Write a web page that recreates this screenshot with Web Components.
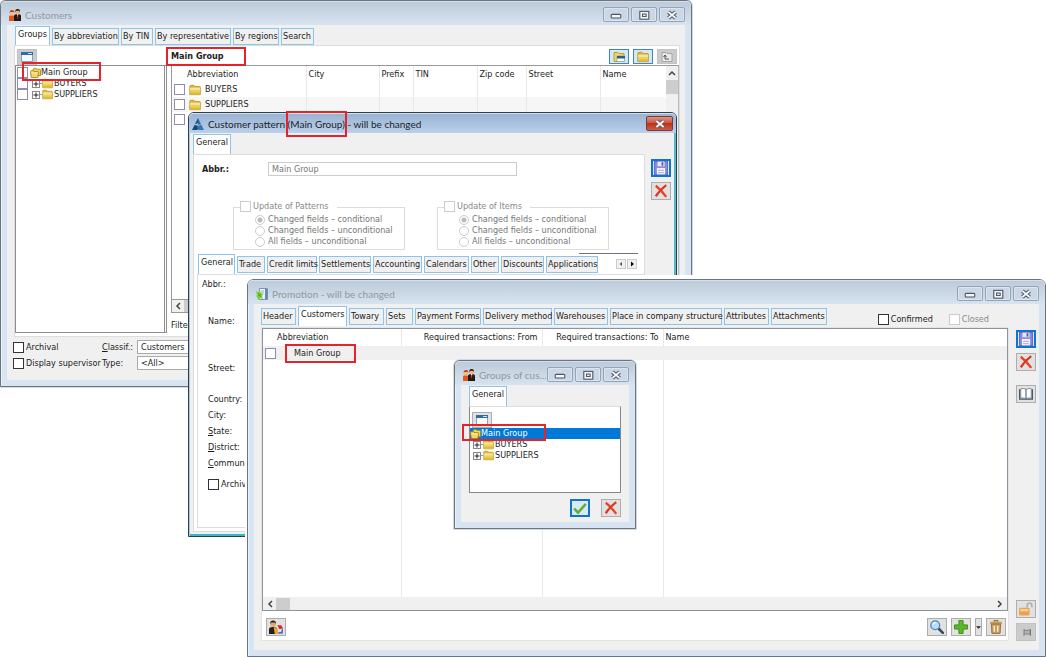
<!DOCTYPE html>
<html lang="en">
<head>
<meta charset="utf-8">
<title>Promotion - will be changed</title>
<style>
html, body { margin: 0; }
body { background: #fff; font: 9px/11px "DejaVu Sans Condensed", Tahoma, "Liberation Sans", sans-serif; color: #1c1c1c; }
</style>
</head>
<body>
<erp-desktop></erp-desktop>
<script>
const ICONS = {
  people: '<path d="M0 11V8q0-2 3-2l3 1v5H0z" fill="#e0561f"/><circle cx="3" cy="4.500" r="2.200" fill="#f4b98c"/><path d="M.6 4Q.5 1 3 1t2.500 3L4.600 3H1.500z" fill="#b8431c"/><path d="M5 12V7q0-2 3.500-2T12 7v5z" fill="#1d1a1a"/><path d="M7.800 5h1.600L8.600 9z" fill="#fff"/><path d="M8.400 6h.6l.3 3-.6 1-.5-1z" fill="#c22"/><circle cx="8.600" cy="3" r="2.200" fill="#f0b27a"/><path d="M6.300 3Q6 0 8.600 0T11 3l-1-1.200H7.300z" fill="#1d1410"/>',
  promo: '<path d="M3.500.5h8v11h-8z" fill="#eef4fb" stroke="#7d94b8"/><path d="M9 1h2.500v10H9z" fill="#6c86b3"/><path d="M5 3h3M5 5h3" stroke="#9db2d0"/><path d="M0 3l2 1 2-1 1 2 2 1-1 2 1 3-3-1-2 2-1-3-1-1 1-1z" fill="#7fd436"/><path d="M2 5l3 4M2 8l3-2" stroke="#3f9c16" stroke-width=".8"/>',
  tri: '<path d="M6 0l3 6-3 1z" fill="#2b6fa8"/><path d="M6 0L2.800 6.500 6 5z" fill="#1d4d7c"/><path d="M2.500 7L0 12h5.500L7 8z" fill="#174a78"/><path d="M9.300 6.500L12 12H6.500L5 8.500z" fill="#2f7cb4"/>',
  folder: '<path d="M.8 2.300q0-1 1-1H5l1 1.200h4.500q.8 0 .8.800v7.400H.8z" fill="#d9b637" stroke="#b8932a" stroke-width=".8"/><path d="M1.200 4h9.700v6.300H1.200z" fill="#ecd05c"/><path d="M1.200 3.600h9.700v2.400H1.200z" fill="#f6e694"/><path d="M1.200 8.500h9.700v1.800H1.200z" fill="#ddb93c"/>',
  open: '<path d="M3.500 3.500q0-2 1-2h2l1 1h3q1 0 1 1v6h-8z" fill="#f1d65c" stroke="#a98413"/><path d="M.5 6q0-2 1-2h2l1 1h4q1 0 1 1l-1 5.500h-7z" fill="#f0d868" stroke="#a98413"/><path d="M2 6.500h6.500" stroke="#fff4b8"/>',
  folderList: '<path d="M1 1.500h4l1 1h5v8H1z" fill="#f0d464" stroke="#c29c2a"/><path d="M4 5h7.500v5.500H4z" fill="#fff" stroke="#7a93ad" stroke-width=".6"/><path d="M4 5h8v2.500H4z" fill="#2c5f8f"/>',
  folderUp: '<path d="M1 1.500h4l1 1h5v8H1z" fill="#e9e9e9" stroke="#a5a5a5"/><path d="M4 8h4M4 4.500V8M2.500 6L4 4l1.500 2" fill="none" stroke="#555"/>',
  win: '<path d="M.5 1.500h11v9H.5z" fill="#f7fafd" stroke="#8aa0b5"/><path d="M0 1h12v3H0z" fill="#2f6da3"/><path d="M7 2.500h4" stroke="#cfe3f4"/>',
  save: '<path d="M.5.500h11v11H.5z" fill="#8b8de0" stroke="#6a6dc4"/><path d="M3 .5h6v4H3z" fill="#e7e9fb"/><path d="M6.500 1h1.500v3H6.500z" fill="#5557a5"/><path d="M2.500 6h7v5.500h-7z" fill="#f3f4fd"/><path d="M3.500 8h5M3.500 10h5" stroke="#a4a6da" stroke-width=".8"/>',
  del: '<path d="M1.500 1.500Q6 5 10.500 11" fill="none" stroke="#e8432a" stroke-width="2"/><path d="M10.500 1Q5 5 1.500 10.500" fill="none" stroke="#d93a22" stroke-width="2"/>',
  book: '<path d="M.5 2v8.500H6h5.500V2" fill="#9fb2c4" stroke="#47586a"/><path d="M1.500 1.500Q4 .8 6 2q2-1.200 4.500-.5v8Q8 9 6 10 4 9 1.500 9.500z" fill="#fff" stroke="#6f7f8f" stroke-width=".7"/><path d="M6 2v8" stroke="#4a5866" stroke-width=".9"/>',
  lock: '<path d="M7 5V3q0-2 2-2t2 2v1.500" fill="none" stroke="#b3b3b3" stroke-width="1.500"/><rect x="0" y="5" width="9" height="6.500" rx="1" fill="#efa04b"/><path d="M1 6h7v2H1z" fill="#fbd29c"/>',
  flag: '<path d="M4 3v7M4 4q2 1 3 .5T10 4v4q-2 .5-3 0T4 8" fill="#b5b5b5" stroke="#777" stroke-width=".9"/><path d="M10.500 3v7" stroke="#777" stroke-width=".9"/>',
  ok: '<path d="M1 6.500l3.300 3.500L11 2.500" fill="none" stroke="#5db030" stroke-width="2.200"/>',
  search: '<path d="M7.500 7.500l3.500 3.500" stroke="#3d4a57" stroke-width="2.200" stroke-linecap="round"/><circle cx="4.500" cy="4.500" r="3.800" fill="#b9dcf7" stroke="#4d86bb" stroke-width="1.100"/><path d="M2.500 4Q3 2 5 2.200" fill="none" stroke="#fff"/>',
  plus: '<path d="M4.200.5h3.600v3.700h3.700v3.600H7.800v3.700H4.200V7.800H.5V4.200h3.700z" fill="#5cb82b" stroke="#3b8b15" stroke-width=".8"/>',
  trash: '<path d="M4.500 1.500V.6h3v.9" fill="none" stroke="#9b6f2c"/><path d="M1 1.500h10v2H1z" fill="#c79a55"/><path d="M2 3.500h8l-.5 8h-7z" fill="#c9a063" stroke="#8f6527" stroke-width=".7"/><path d="M4.500 5v5M7.500 5v5" stroke="#fff3da" stroke-width="1.100"/>',
  person: '<path d="M0 12V8q0-2 3.500-2T7 8v4z" fill="#222"/><circle cx="3.500" cy="3.500" r="2.500" fill="#e8a96d"/><path d="M1 3.500Q.8.500 3.500.5T6 3.500L5 2.200H2z" fill="#2a1a10"/><path d="M4 6.500h2l1 1.500 1 4H5z" fill="#f2a32c"/><path d="M7 4.500h3.500L12 7 9 8z" fill="#d8272b"/><path d="M8 11h3l1-3.500" fill="none" stroke="#4a73c4" stroke-width="1.600"/>',
  caret: '<path d="M0 3h12L6 9z" fill="#222"/>'
};
const svg = (n) => `<svg viewBox="0 0 12 12" aria-hidden="true">${ICONS[n] || ''}</svg>`;
const BASE = `*{box-sizing:border-box}button,input,select{font:inherit;color:inherit;margin:0}`;

function define(name, css, html) {
  const template = document.createElement('template');
  customElements.define(name, class extends HTMLElement {
    connectedCallback() {
      if (this.shadowRoot) return;
      template.innerHTML = `<style>${BASE}${css}</style>` + (typeof html === 'function' ? html(this) : html);
      this.attachShadow({ mode: 'open' }).append(template.content.cloneNode(true));
    }
  });
}

define('ui-icon', `:host{display:inline-block;flex:none;width:12px;height:12px}svg{display:block;width:100%;height:100%}`,
  el => svg(el.getAttribute('name')));

/* Red frame laid over whatever it wraps */
define('ui-mark', `:host{position:relative;display:inline-block}
  i{position:absolute;inset:var(--inset,-4px);border:2px solid #e3242b;z-index:5;pointer-events:none}`,
  `<slot></slot><i></i>`);

define('ui-button', `:host{display:block;flex:none;width:20px;height:18px}
  button{display:grid;place-items:center;width:100%;height:100%;padding:0;background:#e1e1e1;border:1px solid #adadad}
  :host([tone=blue]) button{background:#d3e8f8;border-color:#3f86bf}
  :host([tone=focus]) button{background:#dbe9f6;border:2px solid #0f74cf}
  :host([tone=flat]) button{background:#cbcbcb;border-color:#c2c2c2}
  svg{width:14px;height:14px;display:block}
  :host([tone=blue]) svg,:host([tone=flat]) svg,:host([small]) svg{width:12px;height:12px}
  :host([narrow]){width:7px}:host([narrow]) svg{width:5px;height:5px}`,
  el => `<button type="button" aria-label="${el.getAttribute('label')}">${svg(el.getAttribute('icon'))}</button>`);

define('ui-tab', `:host{display:block;flex:none;width:var(--w,auto)}
  button{display:block;width:100%;height:17px;padding:0 0 1px 1px;text-align:left;white-space:nowrap;background:#f0f0f0;border:1px solid #8cc4ec;margin-bottom:1px}
  :host([selected]) button{height:20px;padding-bottom:4px;padding-left:2px;background:#fff;border-bottom:0;margin:0}`,
  el => `<button type="button" role="tab" aria-selected="${el.hasAttribute('selected')}"><slot></slot></button>`);
define('ui-tabs', `:host{display:flex;align-items:flex-end;gap:2px;height:20px;flex:none}`, `<slot></slot>`);

define('ui-check', `:host{display:block}
  label{display:flex;align-items:center;gap:2px;white-space:nowrap}
  input{appearance:none;flex:none;width:11px;height:11px;border:1px solid #333;background:#fff}
  :host([faint]) input{border-color:#8c8cb4}
  :host([disabled]){color:#8a8a8a} input:disabled{border-color:#ccc}`,
  el => `<label><input type="checkbox" ${el.hasAttribute('disabled') ? 'disabled' : ''} ${el.hasAttribute('label') ? `aria-label="${el.getAttribute('label')}"` : ''}><slot></slot></label>`);

define('ui-radio', `:host{display:block;color:#767676}
  label{display:flex;align-items:center;gap:3px;white-space:nowrap}
  input{appearance:none;flex:none;width:10px;height:10px;border:1px solid #ccc;border-radius:50%;background:#fff}
  input:checked{background:radial-gradient(#bbb 0 2px,#fff 3px)}`,
  el => `<label><input type="radio" disabled ${el.hasAttribute('checked') ? 'checked' : ''}><slot></slot></label>`);

define('ui-controls', `:host{display:flex;gap:2px;flex:none}
  button{display:grid;place-items:center;width:26px;height:15px;padding:0;border:1px solid #93a3b8;border-radius:2px;background:#cbd7e4;box-shadow:inset 0 0 0 1px #dbe5ef}
  button.red{width:27px;background:linear-gradient(#dc9484,#c9523e 50%,#b8331f 50%,#cc5c45);border-color:#7b3a38;box-shadow:none}
  svg{width:12px;height:12px;display:block}`,
  el => {
    const x = (fill, line) => `<svg viewBox="0 0 10 10" aria-hidden="true"><path d="M2 2.500l6 5M8 2.500l-6 5" stroke="${line}" stroke-width="3.200"/><path d="M2 2.500l6 5M8 2.500l-6 5" stroke="${fill}" stroke-width="1.500"/></svg>`;
    if (el.hasAttribute('active')) return `<button class="red" type="button" aria-label="Close">${x('#fff', '#8a4a48')}</button>`;
    return `<button type="button" aria-label="Minimize"><svg viewBox="0 0 10 10"><rect x="1" y="4.500" width="8" height="3" rx=".8" fill="#f4f6f9" stroke="#4b5563" stroke-width=".9"/></svg></button>
    <button type="button" aria-label="Maximize"><svg viewBox="0 0 10 10"><rect x="1.500" y="2" width="7.500" height="6.500" fill="#f4f6f9" stroke="#4b5563" stroke-width=".9"/><rect x="3.800" y="4.200" width="3" height="2" fill="#fff" stroke="#4b5563" stroke-width=".9"/></svg></button>
    <button type="button" aria-label="Close">${x('#f4f6f9', '#4b5563')}</button>`;
  });

define('ui-window', `:host{display:flex;flex-direction:column;position:absolute;background:#d7e4f1;border:1px solid #6b7580;border-radius:6px 6px 0 0;padding:0 6px 6px;box-shadow:inset 1px 0 0 #eaf1f8,0 0 0 1px #d5d9dd}
  header{display:flex;align-items:center;gap:4px;height:24px;flex:none;margin:0 -6px;padding:3px 6px 0 8px;background:linear-gradient(#bccad9,#d7e3ef);border-radius:5px 5px 0 0;font-size:10px;font-family:Lato,"Segoe UI",sans-serif;line-height:12px;color:#9198a0;box-shadow:inset 0 1px 0 #d6dfe8}
  h2{flex:1;min-width:0;margin:0;font:inherit;white-space:nowrap}
  main{flex:1;min-height:0;display:flex;flex-direction:column;background:#f0f0f0}
  :host([active]){padding:0 4px 4px 3px;background:#eef1f4;border-color:#28404f;box-shadow:inset 1px 0 #b9c3cc,inset -2px 0 #58b5c4,inset 0 -2px #3fb3c8}
  :host([active]) header{height:20px;margin:0 -4px 0 -3px;padding:1px 3px 0 3px;background:linear-gradient(#9ab3d2,#b9cfea);color:#20242a}
  ui-controls{align-self:flex-start;margin-top:3px}
  :host([active]) ui-controls{margin-top:2px}`,
  el => `<header><ui-icon name="${el.getAttribute('icon')}"></ui-icon><h2><slot name="title"></slot></h2><ui-controls ${el.hasAttribute('active') ? 'active' : ''}></ui-controls></header><main><slot></slot></main>`);

define('ui-tree', `:host{display:block}
  ul{list-style:none;margin:0;padding:0}
  li{display:flex;align-items:center;height:11px;white-space:nowrap}
  li ui-check{width:11px}
  .b{flex:none;display:grid;place-items:center;width:8px;height:8px;border:1px solid #888;background:#fff}
  .b svg{width:6px;height:6px}
  .dash{width:2px;border-top:1px solid #999}
  ui-icon{width:11px;height:11px}
  .kid .s{width:3px}
  ui-mark{--inset:-5px -13px -3px -19px}
  :host([checks]) .kid .s{width:4px}
  :host([checks]) .root .s{width:2px}
  :host([highlight]) .root{background:#0078d7;color:#fff}
  :host([highlight]) ui-mark{--inset:-4px -18px -2px -19px}
  .kid span{padding-left:1px}`,
  el => {
    const c = t => el.hasAttribute('checks') ? `<ui-check faint label="${t}"></ui-check>` : '';
    const kid = t => `<li class="kid">${c(t)}<i class="s"></i><i class="b"><svg viewBox="0 0 6 6"><path d="M3 .5v5M.5 3h5" stroke="#222"/></svg></i><i class="dash"></i><ui-icon name="folder"></ui-icon><span>${t}</span></li>`;
    return `<ul><li class="root">${c('Main Group')}<i class="s"></i><ui-icon name="open"></ui-icon><ui-mark>Main Group</ui-mark></li>${kid('BUYERS')}${kid('SUPPLIERS')}</ul>`;
  });

const TABLE = `table{border-collapse:collapse;table-layout:fixed;width:100%}
  th{font-weight:400;text-align:left;white-space:nowrap}
  th,td{padding:0;border-right:1px solid #e8e8e8}th:last-child,td:last-child{border-right:0}`;

define('customers-view', `${TABLE}
  :host{display:flex;flex-direction:column;flex:1;min-height:0;padding:1px 5px 0 7px}
  ui-tabs{margin-left:1px}
  .pane{display:grid;grid-template-columns:152px 1fr;column-gap:4px;background:#fff;border:1px solid #ddd;height:292px;margin-top:-1px}
  .left,.right{display:flex;flex-direction:column;min-width:0}
  .bar{height:19px;display:flex;align-items:center;gap:4px;flex:none}
  .left .bar{padding:2px 0 0 2px}
  .left ui-tree{flex:1;border:1px solid #8d8d8d;border-width:1px 3px 1px 1px;border-right-style:double;padding:1px 0 0 1px;margin-bottom:3px}
  .right .bar{padding:2px 2px 0 0}
  h3{flex:1;margin:0;font-size:9px;font-weight:bold}
  h3 ui-mark{--inset:-4px -22px -4px -5px}
  .grid{flex:1;display:flex;border:1px solid #999;border-right-color:#bbb;min-height:0}
  .grid>div{flex:1;min-width:0}
  th{height:16px;padding-left:2px}th:first-child{padding-left:15px}
  td{height:15px}tr.alt{background:#f6f6f6}
  .c{display:flex;align-items:center;gap:4px;padding-left:2px}
  .grid>.vs{flex:none;width:12px;background:#f0f0f0;display:flex;flex-direction:column;align-items:center}
  .vs svg{width:8px;height:14px}.vs i{width:12px;height:14px;background:#cdcdcd}
  .hs{height:13px;background:#f0f0f0;border:1px solid #999;border-top:0;display:flex;align-items:center}
  .hs svg{width:12px;height:8px}.hs i{width:24px;height:12px;background:#cdcdcd}
  .f{height:23px;padding-top:7px}
  .bar ui-button{height:15px}.left .bar ui-button{height:16px}
  .foot{display:grid;grid-template-columns:88px 34px 150px;gap:2px 1px;align-items:center;margin-left:-1px;padding-top:3px}
  select{appearance:none;height:14px;padding:0 3px;border:1px solid #aaa;background:#fff;border-radius:0}
  u{text-underline-offset:1px}`,
  `<ui-tabs><ui-tab selected style="--w:35px">Groups</ui-tab><ui-tab style="--w:67px">By abbreviation</ui-tab><ui-tab style="--w:32px">By TIN</ui-tab><ui-tab style="--w:76px">By representative</ui-tab><ui-tab style="--w:46px">By regions</ui-tab><ui-tab style="--w:33px">Search</ui-tab></ui-tabs>
  <div class="pane">
    <div class="left"><div class="bar"><ui-button icon="win" label="Window" tone="flat"></ui-button></div><ui-tree checks></ui-tree></div>
    <div class="right">
      <div class="bar"><h3><ui-mark>Main Group</ui-mark></h3><ui-button icon="folderList" label="List" tone="blue"></ui-button><ui-button icon="folder" label="Folder" tone="blue"></ui-button><ui-button icon="folderUp" label="Up" tone="flat"></ui-button></div>
      <div class="grid"><div><table><colgroup><col style="width:134px"><col style="width:73px"><col style="width:34px"><col style="width:64px"><col style="width:49px"><col style="width:74px"><col></colgroup>
        <thead><tr><th>Abbreviation</th><th>City</th><th>Prefix</th><th>TIN</th><th>Zip code</th><th>Street</th><th>Name</th></tr></thead>
        <tbody><tr><td><div class="c"><ui-check faint label="Select BUYERS"></ui-check><ui-icon name="folder"></ui-icon><span>BUYERS</span></div></td><td></td><td></td><td></td><td></td><td></td><td></td></tr>
        <tr class="alt"><td><div class="c"><ui-check faint label="Select SUPPLIERS"></ui-check><ui-icon name="folder"></ui-icon><span>SUPPLIERS</span></div></td><td></td><td></td><td></td><td></td><td></td><td></td></tr>
        <tr><td><div class="c"><ui-check faint label="Select row"></ui-check></div></td><td></td><td></td><td></td><td></td><td></td><td></td></tr></tbody></table></div>
        <div class="vs"><svg viewBox="0 0 8 14"><path d="M1 9l3-3 3 3" fill="none" stroke="#444" stroke-width="1.500"/></svg><i></i></div></div>
      <div class="hs"><svg viewBox="0 0 12 8"><path d="M8 1L5 4l3 3" fill="none" stroke="#444" stroke-width="1.500"/></svg><i></i></div>
      <div class="f">Filter</div>
    </div>
  </div>
  <div class="foot"><ui-check>Archival</ui-check><label for="cl"><u>C</u>lassif.:</label><select id="cl"><option>Customers</option></select>
  <ui-check>Display supervisor</ui-check><label for="ty">Type:</label><select id="ty"><option>&lt;All&gt;</option></select></div>`);

define('update-options', `:host{display:block;width:172px}
  fieldset{margin:0;border:1px solid #dcdcdc;padding:1px 0 0 21px;height:49px;min-width:0}
  legend{margin-left:-15px;padding:0 8px 1px 0;height:12px}
  ui-radio{height:11px}`,
  `<fieldset><legend><ui-check disabled><slot></slot></ui-check></legend>
  <ui-radio checked>Changed fields – conditional</ui-radio><ui-radio>Changed fields – unconditional</ui-radio><ui-radio>All fields – unconditional</ui-radio></fieldset>`);

define('pattern-view', `:host{display:flex;flex-direction:column;flex:1;min-height:0;padding:1px 0 0 1px}
  .body{flex:1;display:grid;grid-template-columns:1fr 21px;column-gap:6px;min-height:0}
  .pane{background:#fff;border:1px solid #ddd;display:flex;flex-direction:column;min-width:0;padding:7px 0 3px 3px}
  .row{display:flex;align-items:center;padding-left:5px}
  .row label{width:66px;font-weight:bold}
  .row input{width:249px;height:14px;border:1px solid #ccc;background:#fff;color:#767676;padding:0 3px}
  .sets{display:flex;gap:32px;margin:25px 0 0 36px}
  .tabs{display:flex;align-items:center;margin:4px 0 0 1px;position:relative}
  .tabs::after{content:"";position:absolute;right:6px;top:-1px;width:59px;height:1px;background:#6d7480}
  .tabs ui-tabs{flex:1}
  .spin{display:flex;margin-right:7px;gap:1px}
  .spin button{width:10px;height:10px;padding:0;border:1px solid #ccc;background:#f0f0f0;display:grid;place-items:center}
  .spin svg{width:6px;height:6px}
  .inner{flex:1;border:1px solid #ddd;border-right:0;padding:4px 0 0 10px}
  dl{margin:0;display:grid;grid-template-rows:37px 47px 31px 16px 16px 16px 16px 21px}
  dt:first-child{margin-left:-6px}
  .side{display:flex;flex-direction:column;gap:5px;padding-top:5px}`,
  `<ui-tabs><ui-tab selected style="--w:38px">General</ui-tab></ui-tabs>
  <div class="body"><div class="pane">
    <div class="row"><label for="ab">Abbr.:</label><input id="ab" value="Main Group" disabled></div>
    <div class="sets"><update-options>Update of Patterns</update-options><update-options>Update of Items</update-options></div>
    <div class="tabs"><ui-tabs><ui-tab selected style="--w:37px">General</ui-tab><ui-tab style="--w:28px">Trade</ui-tab><ui-tab style="--w:50px">Credit limits</ui-tab><ui-tab style="--w:52px">Settlements</ui-tab><ui-tab style="--w:49px">Accounting</ui-tab><ui-tab style="--w:45px">Calendars</ui-tab><ui-tab style="--w:28px">Other</ui-tab><ui-tab style="--w:43px">Discounts</ui-tab><ui-tab style="--w:52px">Applications</ui-tab></ui-tabs>
    <div class="spin"><button type="button" aria-label="Scroll left"><svg viewBox="0 0 6 6"><path d="M4 1v4L1.500 3z" fill="#555"/></svg></button><button type="button" aria-label="Scroll right"><svg viewBox="0 0 6 6"><path d="M2 .5v5L5 3z" fill="#000"/></svg></button></div></div>
    <div class="inner"><dl><dt>Abbr.:</dt><dt>Name:</dt><dt>Street:</dt><dt>Country:</dt><dt>City:</dt><dt><u>S</u>tate:</dt><dt><u>D</u>istrict:</dt><dt><u>C</u>ommune:</dt></dl><ui-check>Archival</ui-check></div>
  </div><div class="side"><ui-button icon="save" label="Save" tone="focus"></ui-button><ui-button icon="del" label="Cancel"></ui-button></div></div>`);

define('promotion-view', `${TABLE}
  :host{display:flex;flex-direction:column;flex:1;min-height:0;padding:2px 3px 9px 7px}
  .top{display:flex;align-items:flex-end;margin-bottom:1px}
  .top ui-tabs{flex:1}
  .ch{display:flex;gap:16px;margin:0 47px 1px 0}
  .body{flex:1;display:grid;grid-template-columns:1fr 20px;column-gap:7px;min-height:0}
  .pane{display:flex;flex-direction:column;min-width:0;background:#fff;border:1px solid #e4e4e4}
  .grid{flex:1;display:flex;flex-direction:column;border:1px solid #8d949b;min-height:0}
  table{height:100%}
  .wrap{flex:1;min-height:0}
  th{height:17px}th.r{text-align:right;padding-right:4px}
  th:first-child{padding-left:14px}th:last-child{padding-left:2px}
  .row td{height:14px;background:#f0f0f0;border:0}
  .row div{display:flex;align-items:center;padding-left:2px;gap:18px}
  .row ui-mark{--inset:-4px -15px -4px -9px}
  .hs{height:13px;background:#f0f0f0;display:flex;align-items:center;flex:none}
  .hs svg{width:13px;height:8px}.hs i{width:14px;height:12px;background:#cdcdcd;margin-right:auto}
  .tools{display:flex;align-items:center;gap:4px;height:29px;padding:3px 2px 0 4px;flex:none}
  .tools .s{flex:1}
  .side{display:flex;flex-direction:column;gap:5px;padding-top:3px}
  .side .g{height:4px}.side .s{flex:1}`,
  `<div class="top"><ui-tabs><ui-tab style="--w:35px">Header</ui-tab><ui-tab selected style="--w:49px">Customers</ui-tab><ui-tab style="--w:35px">Towary</ui-tab><ui-tab style="--w:27px">Sets</ui-tab><ui-tab style="--w:66px">Payment Forms</ui-tab><ui-tab style="--w:69px">Delivery method</ui-tab><ui-tab style="--w:54px">Warehouses</ui-tab><ui-tab style="--w:112px">Place in company structure</ui-tab><ui-tab style="--w:45px">Attributes</ui-tab><ui-tab style="--w:56px">Attachments</ui-tab></ui-tabs>
  <div class="ch"><ui-check>Confirmed</ui-check><ui-check disabled>Closed</ui-check></div></div>
  <div class="body"><div class="pane"><div class="grid"><div class="wrap"><table><colgroup><col style="width:138px"><col style="width:141px"><col style="width:121px"><col></colgroup>
    <thead><tr><th>Abbreviation</th><th class="r">Required transactions: From</th><th class="r">Required transactions: To</th><th>Name</th></tr></thead>
    <tbody><tr class="row"><td><div><ui-check faint label="Select Main Group"></ui-check><ui-mark>Main Group</ui-mark></div></td><td></td><td></td><td></td></tr><tr><td></td><td></td><td></td><td></td></tr></tbody></table></div>
    <div class="hs"><svg viewBox="0 0 13 8"><path d="M9 1L6 4l3 3" fill="none" stroke="#444" stroke-width="1.500"/></svg><i></i><svg viewBox="0 0 13 8"><path d="M4 1l3 3-3 3" fill="none" stroke="#444" stroke-width="1.500"/></svg></div></div>
    <div class="tools"><ui-button icon="person" label="Assign"></ui-button><i class="s"></i><ui-button icon="search" label="Search"></ui-button><ui-button icon="plus" label="Add"></ui-button><ui-button icon="caret" label="More" narrow></ui-button><ui-button icon="trash" label="Delete"></ui-button></div></div>
  <div class="side"><ui-button icon="save" label="Save" tone="focus"></ui-button><ui-button icon="del" label="Cancel"></ui-button><i class="g"></i><ui-button icon="book" label="Book"></ui-button><i class="s"></i><ui-button icon="lock" label="Lock"></ui-button><ui-button icon="flag" label="Flag" tone="flat"></ui-button></div></div>`);

define('groups-view', `:host{display:flex;flex-direction:column;flex:1;min-height:0;padding:1px 8px 5px 8px}
  .box{flex:1;background:#fff;border:1px solid #888;border-top-color:#ddd;padding:5px 0 0 0}
  .box ui-button{margin-left:2px;height:16px}
  .acts{display:flex;justify-content:flex-end;gap:11px;padding-top:6px}`,
  `<ui-tabs><ui-tab selected style="--w:38px">General</ui-tab></ui-tabs>
  <div class="box"><ui-button icon="win" label="Window" small></ui-button><ui-tree highlight></ui-tree></div>
  <div class="acts"><ui-button icon="ok" label="OK" tone="focus"></ui-button><ui-button icon="del" label="Cancel"></ui-button></div>`);

define('erp-desktop', `:host{display:block;position:relative;min-height:max(100vh,560px);overflow:hidden}
  .cust{left:0;top:0;right:354px;height:387px}
  .pat{left:188px;top:112px;right:369px;height:425px}
  .promo{left:247px;top:279px;right:0;bottom:0;outline:2px solid #fff;box-shadow:inset 1px 0 #eaf1f8,0 -4px #fff}
  .grp{left:454px;top:360px;width:182px;height:169px}
  ui-mark{--inset:-7px -2px}`,
  `<ui-window class="cust" icon="people"><span slot="title">Customers</span><customers-view></customers-view></ui-window>
  <ui-window class="pat" icon="tri" active><span slot="title">Customer pattern <ui-mark>(Main Group)</ui-mark> - will be changed</span><pattern-view></pattern-view></ui-window>
  <ui-window class="promo" icon="promo"><span slot="title">Promotion - will be changed</span><promotion-view></promotion-view></ui-window>
  <ui-window class="grp" icon="people"><span slot="title">Groups of cus...</span><groups-view></groups-view></ui-window>`);
</script>
</body>
</html>
